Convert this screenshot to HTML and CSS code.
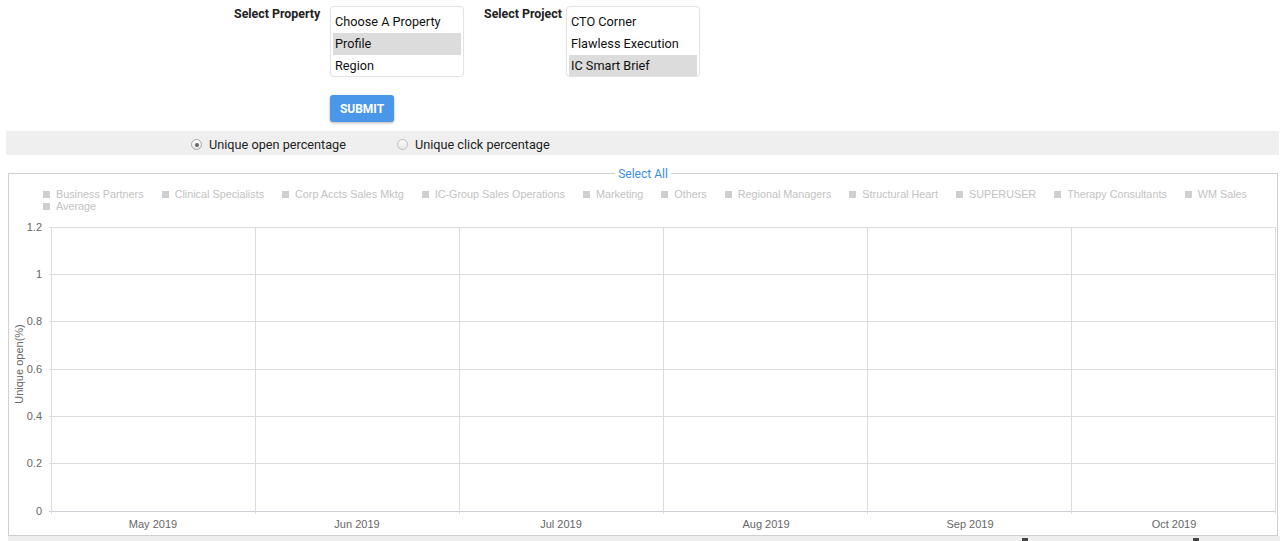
FILE: index.html
```html
<!DOCTYPE html>
<html lang="en">
<head>
  <meta charset="UTF-8" />
  <meta name="viewport" content="width=device-width, initial-scale=1.0"/>
  <title>Email Report</title>
  <link rel="stylesheet" href="styles.css">
</head>
<body>

  <div class="filters">
    <div class="filter">
      <label class="filter-label property-label">Select Property</label>
      <div class="listbox">
        <div class="option">Choose A Property</div>
        <div class="option selected">Profile</div>
        <div class="option">Region</div>
      </div>
    </div>
    <div class="filter">
      <label class="filter-label project-label">Select Project</label>
      <div class="listbox">
        <div class="option">CTO Corner</div>
        <div class="option">Flawless Execution</div>
        <div class="option selected">IC Smart Brief</div>
      </div>
    </div>
  </div>

  <div class="actions">
    <button class="submit-btn">SUBMIT</button>
  </div>

  <!-- Metric switch -->
  <div class="metric-bar">
    <label class="metric"><span class="radio checked"></span>Unique open percentage</label>
    <label class="metric"><span class="radio"></span>Unique click percentage</label>
  </div>

  <!-- Chart -->
  <div class="chart-box">
    <span class="chart-title">Select All</span>
    <ul class="legend">
      <li>Business Partners</li>
      <li>Clinical Specialists</li>
      <li>Corp Accts Sales Mktg</li>
      <li>IC-Group Sales Operations</li>
      <li>Marketing</li>
      <li>Others</li>
      <li>Regional Managers</li>
      <li>Structural Heart</li>
      <li>SUPERUSER</li>
      <li>Therapy Consultants</li>
      <li>WM Sales</li>
      <li>Average</li>
    </ul>
    <svg class="plot" width="1268" height="322" viewBox="0 0 1268 322">
      <g class="grid">
        <line x1="40" y1="15.5" x2="1267" y2="15.5" />
        <line x1="40" y1="62.5" x2="1267" y2="62.5" />
        <line x1="40" y1="109.5" x2="1267" y2="109.5" />
        <line x1="40" y1="157.5" x2="1267" y2="157.5" />
        <line x1="40" y1="204.5" x2="1267" y2="204.5" />
        <line x1="40" y1="251.5" x2="1267" y2="251.5" />
        <line x1="40" y1="299.5" x2="1267" y2="299.5" class="base" />
        <line x1="42.5" y1="15" x2="42.5" y2="302" />
        <line x1="246.5" y1="15" x2="246.5" y2="302" />
        <line x1="450.5" y1="15" x2="450.5" y2="302" />
        <line x1="654.5" y1="15" x2="654.5" y2="302" />
        <line x1="858.5" y1="15" x2="858.5" y2="302" />
        <line x1="1062.5" y1="15" x2="1062.5" y2="302" />
        <line x1="1266.5" y1="15" x2="1266.5" y2="302" />
      </g>
      <g class="y-labels">
        <text x="33" y="19">1.2</text>
        <text x="33" y="66">1</text>
        <text x="33" y="113">0.8</text>
        <text x="33" y="161">0.6</text>
        <text x="33" y="208">0.4</text>
        <text x="33" y="255">0.2</text>
        <text x="33" y="303">0</text>
      </g>
      <g class="x-labels">
        <text x="144" y="316">May 2019</text>
        <text x="348" y="316">Jun 2019</text>
        <text x="552" y="316">Jul 2019</text>
        <text x="757" y="316">Aug 2019</text>
        <text x="961" y="316">Sep 2019</text>
        <text x="1165" y="316">Oct 2019</text>
      </g>
      <text class="axis-title" transform="translate(14 152) rotate(-90)">Unique open(%)</text>
    </svg>
  </div>

  <div class="bottom-strip">
    <span class="mark"></span>
    <span class="mark"></span>
  </div>

</body>
</html>
```

FILE: styles.css
```css
body {
  margin: 0;
  font-family: Roboto, 'Liberation Sans', Arial, sans-serif;
  background: #fff;
  color: #222;
}

/* Filters */
.filters {
  display: flex;
  padding: 6px 0 0 234px;
  gap: 20px;
}

.filter {
  display: flex;
  align-items: flex-start;
}

.filter-label {
  font-size: 12.4px;
  font-weight: bold;
  line-height: 16px;
  color: #222;
}

.property-label {
  width: 96px;
}

.project-label {
  width: 82px;
}

.listbox {
  width: 134px;
  height: 71px;
  box-sizing: border-box;
  border: 1px solid #e3e3e3;
  border-radius: 4px;
  padding: 4px 2px 0;
  overflow: hidden;
  box-shadow: 0 0 1px rgba(0, 0, 0, 0.08);
}

.option {
  height: 22px;
  line-height: 22px;
  padding: 0 2px;
  font-size: 12.7px;
  color: #111;
  white-space: nowrap;
}

.option.selected {
  background-color: #dcdcdc;
}

.actions {
  padding: 18px 0 0 330px;
}

.submit-btn {
  display: block;
  width: 64px;
  height: 27px;
  border: none;
  border-radius: 3px;
  background-color: #4a97ea;
  color: white;
  font-family: Roboto, 'Liberation Sans', Arial, sans-serif;
  font-size: 12px;
  font-weight: bold;
  cursor: pointer;
  box-shadow: 0 1px 3px rgba(0, 0, 0, 0.3);
}

/* Metric switch */
.metric-bar {
  margin: 9px 1px 0 6px;
  height: 24px;
  box-sizing: border-box;
  padding: 3px 0 0 185px;
  background-color: #efefef;
  display: flex;
  align-items: center;
  gap: 51px;
}

.metric {
  display: flex;
  align-items: center;
  font-size: 12.7px;
  color: #222;
}

.radio {
  width: 9px;
  height: 9px;
  border: 1px solid #bdbdbd;
  border-radius: 50%;
  background: linear-gradient(#fdfdfd, #e6e6e6);
  margin-right: 7px;
  display: flex;
  align-items: center;
  justify-content: center;
}

.radio.checked {
  border-color: #a8a8a8;
}

.radio.checked::after {
  content: "";
  width: 4px;
  height: 4px;
  border-radius: 50%;
  background: #666;
}

/* Chart */
.chart-box {
  position: relative;
  margin: 18px 0 0 8px;
  width: 1270px;
  height: 363px;
  box-sizing: border-box;
  border: 1px solid #d0d0d0;
}

.chart-title {
  position: absolute;
  top: -7px;
  left: 0;
  right: 0;
  width: 56px;
  margin: 0 auto;
  background: #fff;
  text-align: center;
  font-size: 12px;
  line-height: 14px;
  color: #3a8ee6;
}

.legend {
  list-style: none;
  margin: 0;
  padding: 14px 0 0 34px;
  width: 1219px;
  height: 24px;
  display: flex;
  flex-wrap: wrap;
  column-gap: 18px;
  font-family: 'Liberation Sans', Arial, sans-serif;
  font-size: 10.8px;
  line-height: 12px;
  color: #c2c2c2;
}

.legend li {
  display: flex;
  align-items: center;
}

.legend li::before {
  content: "";
  width: 7px;
  height: 7px;
  background: #cfcfcf;
  margin-right: 6px;
}

.plot {
  display: block;
  font-family: 'Liberation Sans', Arial, sans-serif;
  font-size: 11px;
}

.grid line {
  stroke: #dcdcdc;
  stroke-width: 1;
}

.grid line.base {
  stroke: #ccd0d6;
}

.y-labels text {
  fill: #666;
  text-anchor: end;
}

.x-labels text {
  fill: #666;
  text-anchor: middle;
}

.axis-title {
  fill: #666;
  text-anchor: middle;
}

.bottom-strip {
  margin-left: 8px;
  height: 6px;
  background: #eee;
  display: flex;
  align-items: flex-end;
  padding-left: 1014px;
  gap: 165px;
}

.mark {
  width: 6px;
  height: 4px;
  background: #444;
}
```
